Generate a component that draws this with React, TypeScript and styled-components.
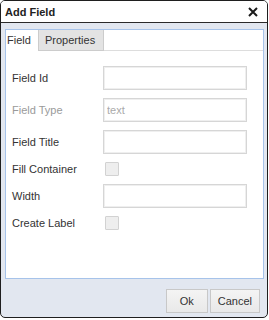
import React from "react";
import styled, { createGlobalStyle } from "styled-components";

const Global = createGlobalStyle`
  html, body { margin: 0; padding: 0; background: #ffffff; }
  body { font-family: "Liberation Sans", Arial, sans-serif; }
  * { box-sizing: border-box; }
`;

const Dialog = styled.div`
  width: 268px;
  height: 318px;
  border: 1px solid #1f1f1f;
  border-radius: 5px;
  background: #e2e7f0;
  display: flex;
  flex-direction: column;
  overflow: hidden;
  font-family: "Liberation Sans", Arial, sans-serif;
  font-size: 11px;
  color: #333;
`;

const Header = styled.div`
  height: 22px;
  flex: none;
  background: #ffffff;
  border-bottom: 1px solid #2a2a2a;
  display: flex;
  align-items: center;
  justify-content: space-between;
  padding: 0 9px 0 4px;
`;

const Title = styled.span`
  font-weight: bold;
  font-size: 11px;
  color: #222;
`;

const CloseButton = styled.button`
  border: 0;
  background: none;
  padding: 0;
  width: 10px;
  height: 10px;
  display: flex;
  color: #1a1a1a;
`;

const Body = styled.div`
  flex: 1;
  display: flex;
  flex-direction: column;
  padding: 6px 3px 0 4px;
`;

const Panel = styled.div`
  flex: 1;
  background: #ffffff;
  border: 1px solid #a6c3ea;
  display: flex;
  flex-direction: column;
`;

const TabStrip = styled.div`
  display: flex;
  height: 21px;
  flex: none;
`;

const Tab = styled.div<{ $active?: boolean }>`
  display: flex;
  align-items: center;
  height: 21px;
  padding: ${(p) => (p.$active ? "0 0 0 1px" : "0 6px 0 6px")};
  width: ${(p) => (p.$active ? "32px" : "66px")};
  background: ${(p) => (p.$active ? "#ffffff" : "#e3e3e3")};
  border-bottom: 1px solid ${(p) => (p.$active ? "transparent" : "#cccccc")};
  border-left: ${(p) => (p.$active ? "0" : "1px solid #cccccc")};
  border-right: ${(p) => (p.$active ? "0" : "1px solid #cccccc")};
  font-size: 11px;
  color: #333;
`;

const TabFill = styled.div`
  flex: 1;
  border-bottom: 1px solid #dddddd;
`;

const Form = styled.div`
  display: flex;
  flex-direction: column;
  gap: 8px;
  padding: 15px 0 0 6px;
`;

const Row = styled.div`
  display: flex;
  align-items: center;
`;

const Label = styled.label<{ $disabled?: boolean }>`
  width: 91px;
  font-size: 11px;
  color: ${(p) => (p.$disabled ? "#9a9a9a" : "#333333")};
`;

const Input = styled.input`
  width: 144px;
  height: 24px;
  border: 1px solid #d6d6d6;
  box-shadow: inset 0 0 0 1px #efefef;
  background: #ffffff;
  padding: 0 3px;
  font-family: "Liberation Sans", Arial, sans-serif;
  font-size: 11px;
  color: #333;
  outline: none;
  &:disabled {
    color: #aaaaaa;
    background: #ffffff;
  }
`;

const Check = styled.span`
  width: 14px;
  height: 14px;
  margin-left: 2px;
  background: #eeeeee;
  border: 1px solid #d2d2d2;
  border-radius: 1px;
`;

const Footer = styled.div`
  height: 38px;
  flex: none;
  display: flex;
  justify-content: flex-end;
  align-items: flex-start;
  gap: 2px;
  padding: 10px 7px 0 0;
`;

const Button = styled.button`
  height: 24px;
  min-width: 42px;
  padding: 0 7px;
  border: 1px solid #c8c8c8;
  background: linear-gradient(#f4f4f4, #e9e9e9);
  font-family: "Liberation Sans", Arial, sans-serif;
  font-size: 11px;
  color: #333;
`;

const fields: { label: string; kind: "input" | "check"; disabled?: boolean; value?: string }[] = [
  { label: "Field Id", kind: "input" },
  { label: "Field Type", kind: "input", disabled: true, value: "text" },
  { label: "Field Title", kind: "input" },
  { label: "Fill Container", kind: "check" },
  { label: "Width", kind: "input" },
  { label: "Create Label", kind: "check" },
];

export default function App() {
  return (
    <>
      <Global />
      <Dialog>
        <Header>
          <Title>Add Field</Title>
          <CloseButton aria-label="Close">
            <svg width="10" height="10" viewBox="0 0 10 10">
              <path d="M1 1 L9 9 M9 1 L1 9" stroke="currentColor" strokeWidth="2" fill="none" />
            </svg>
          </CloseButton>
        </Header>
        <Body>
          <Panel>
            <TabStrip>
              <Tab $active>Field</Tab>
              <Tab>Properties</Tab>
              <TabFill />
            </TabStrip>
            <Form>
              {fields.map((f) => (
                <Row key={f.label}>
                  <Label $disabled={f.disabled}>{f.label}</Label>
                  {f.kind === "input" ? (
                    <Input disabled={f.disabled} defaultValue={f.value ?? ""} />
                  ) : (
                    <Check />
                  )}
                </Row>
              ))}
            </Form>
          </Panel>
        </Body>
        <Footer>
          <Button>Ok</Button>
          <Button>Cancel</Button>
        </Footer>
      </Dialog>
    </>
  );
}
